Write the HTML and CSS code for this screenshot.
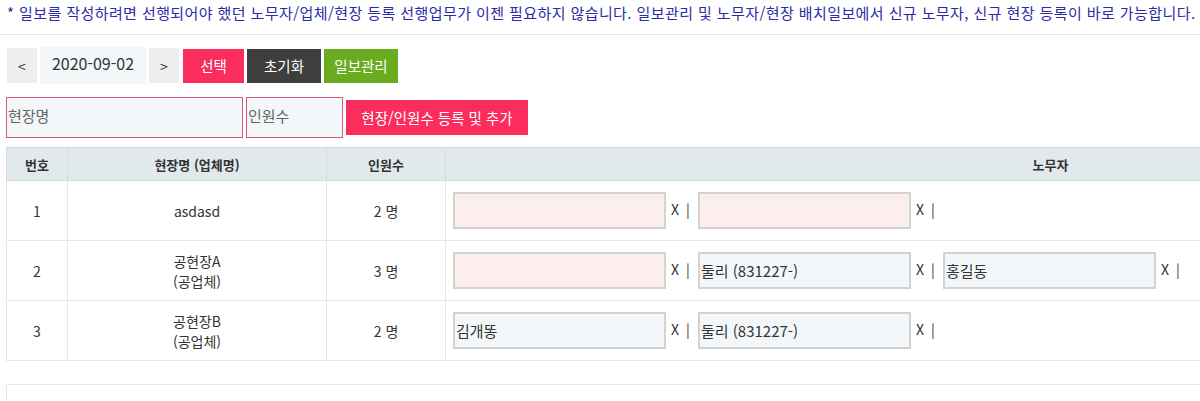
FILE: index.html
```html
<!DOCTYPE html>
<html lang="ko">
<head>
<meta charset="utf-8">
<title>일보</title>
<link rel="stylesheet" href="styles.css">
</head>
<body>
<div class="page">
  <p class="notice">* 일보를 작성하려면 선행되어야 했던 노무자/업체/현장 등록 선행업무가 이젠 필요하지 않습니다. 일보관리 및 노무자/현장 배치일보에서 신규 노무자, 신규 현장 등록이 바로 가능합니다.</p>

  <div class="toolbar">
    <button class="nav">&lt;</button>
    <div class="date">2020-09-02</div>
    <button class="nav">&gt;</button>
    <button class="btn red w-sel">선택</button>
    <button class="btn dark">초기화</button>
    <button class="btn green">일보관리</button>
  </div>

  <div class="register">
    <div class="field f-site">현장명</div>
    <div class="field f-count">인원수</div>
    <button class="btn red w-reg">현장/인원수 등록 및 추가</button>
  </div>

  <table class="grid">
    <thead>
      <tr>
        <th class="c-no">번호</th>
        <th class="c-site">현장명 (업체명)</th>
        <th class="c-cnt">인원수</th>
        <th class="c-work">노무자</th>
      </tr>
    </thead>
    <tbody>
      <tr>
        <td>1</td>
        <td>asdasd</td>
        <td>2 명</td>
        <td class="workers">
          <div class="wl">
            <span class="box empty"></span><span class="x">X |</span>
            <span class="box empty"></span><span class="x">X |</span>
          </div>
        </td>
      </tr>
      <tr>
        <td>2</td>
        <td>공현장A<br>(공업체)</td>
        <td>3 명</td>
        <td class="workers">
          <div class="wl">
            <span class="box empty"></span><span class="x">X |</span>
            <span class="box">둘리 (831227-)</span><span class="x">X |</span>
            <span class="box">홍길동</span><span class="x">X |</span>
          </div>
        </td>
      </tr>
      <tr>
        <td>3</td>
        <td>공현장B<br>(공업체)</td>
        <td>2 명</td>
        <td class="workers">
          <div class="wl">
            <span class="box">김개똥</span><span class="x">X |</span>
            <span class="box">둘리 (831227-)</span><span class="x">X |</span>
          </div>
        </td>
      </tr>
    </tbody>
  </table>

  <div class="panel"></div>
</div>
</body>
</html>
```

FILE: styles.css
```css
html, body {
  margin: 0;
  padding: 0;
  background: #fff;
  overflow: hidden;
}
body {
  font-family: "Noto Sans CJK KR", "Noto Sans", sans-serif;
  color: #333;
  width: 1200px;
  height: 401px;
}
.page {
  width: 1200px;
  height: 401px;
  overflow: hidden;
}
.notice {
  margin: 0;
  padding: 1px 0 0 7px;
  height: 33px;
  color: #2b2ba6;
  font-size: 15px;
  line-height: 24px;
  letter-spacing: 0.41px;
  white-space: nowrap;
  border-bottom: 1px solid #e6e6e6;
}
.toolbar {
  display: flex;
  align-items: center;
  margin-top: 12px;
  padding-left: 7px;
  height: 37px;
}
.nav {
  width: 30px;
  height: 35px;
  border: 0;
  background: #eeeeee;
  color: #333;
  font-family: inherit;
  font-size: 14px;
  padding: 0;
  margin-right: 3px;
}
.date {
  width: 106px;
  height: 37px;
  background: #f3f7f9;
  font-size: 16px;
  line-height: 32px;
  text-align: center;
  margin-right: 3px;
  color: #333;
}
.toolbar .nav + .btn { margin-left: 1px; }
.btn {
  height: 34px;
  border: 0;
  padding: 0;
  font-family: inherit;
  font-size: 14.5px;
  color: #fff;
  margin-right: 3px;
  width: 74px;
}
.red { background: #fa2d5d; }
.dark { background: #3e3e3e; }
.green { background: #6aac1f; }
.w-sel { width: 61px; }
.register {
  display: flex;
  align-items: center;
  margin-top: 13px;
  padding-left: 6px;
  height: 41px;
}
.field {
  box-sizing: border-box;
  height: 41px;
  background: #f3f7f9;
  border: 1px solid #d8587e;
  color: #666;
  font-size: 15px;
  line-height: 36px;
  padding-left: 1px;
  margin-right: 3px;
}
.f-site { width: 237px; }
.f-count { width: 97px; }
.w-reg {
  width: 182px;
  height: 35px;
}
.grid {
  margin: 9px 0 0 6px;
  border-collapse: collapse;
  width: 1650px;
  table-layout: fixed;
  font-size: 14px;
}
.grid th {
  background: #e1e9ed;
  height: 32px;
  font-weight: 600;
  font-size: 13px;
  color: #333;
  border: 1px solid #d3dde2;
  padding: 0;
}
.grid td {
  border: 1px solid #e6e6e6;
  text-align: center;
  vertical-align: middle;
  height: 59px;
  padding: 0;
  line-height: 20px;
  color: #333;
}
.c-no { width: 60px; }
.c-site { width: 258px; }
.c-cnt { width: 118px; }
.grid td.workers {
  text-align: left;
  padding-left: 7px;
}
.wl {
  display: flex;
  align-items: center;
}
.box {
  box-sizing: border-box;
  display: block;
  flex: none;
  width: 213px;
  height: 37px;
  border: 2px solid #d2d2d2;
  background: #f3f7f9;
  font-size: 15px;
  line-height: 33px;
  padding-left: 1px;
  color: #333;
}
.box.empty { background: #fdeeee; }
.x {
  flex: none;
  width: 27px;
  margin-left: 5px;
  font-size: 14px;
  color: #333;
  word-spacing: 3px;
  position: relative;
  top: -2px;
}
.panel {
  margin: 23px 0 0 6px;
  height: 40px;
  border: 1px solid #e6e6e6;
  width: 1650px;
}
```
